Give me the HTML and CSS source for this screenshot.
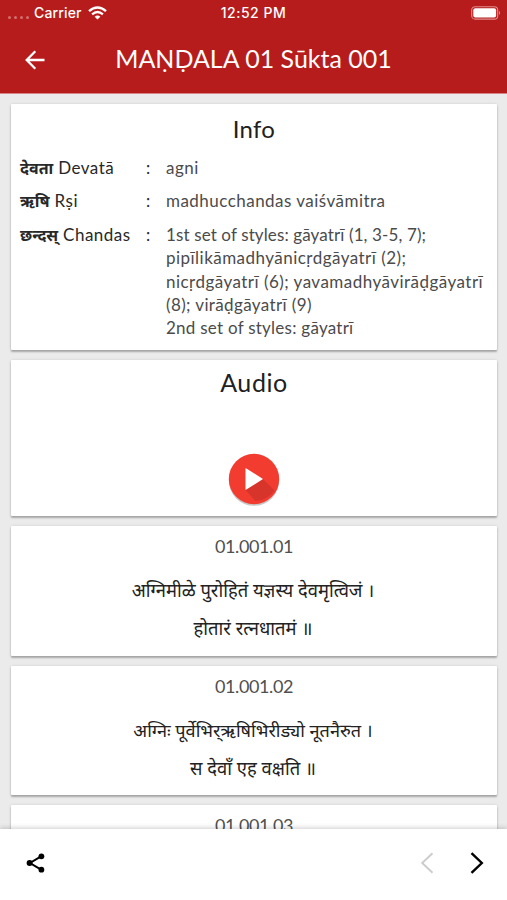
FILE: index.html
```html
<!DOCTYPE html>
<html lang="sa">
<head>
<meta charset="utf-8">
<title>Maṇḍala 01 Sūkta 001</title>
<link rel="stylesheet" href="styles.css">
</head>
<body>
<div class="screen">
  <header class="header">
    <div class="status">
      <div class="carrier">
        <span class="dots"><i></i><i></i><i></i><i></i></span>
        <span class="carrier-name">Carrier</span>
        <svg class="wifi" width="19" height="14" viewBox="0 0 19 14" fill="none" stroke="#fff" stroke-width="2.4"><path d="M1 5.1Q9.5-2.3 18 5.1"/><path d="M4.1 8.4Q9.5 3.8 14.9 8.4"/><path d="M9.5 13.6 6.6 10.8Q9.5 8.4 12.4 10.8Z" fill="#fff" stroke="none"/></svg>
      </div>
      <span class="time">12:52 PM</span>
      <svg class="battery" width="30" height="14" viewBox="0 0 30 14"><rect x=".7" y=".7" width="26" height="12.4" rx="3.4" fill="none" stroke="#e08c8c" stroke-width="1.1"/><rect x="2.3" y="2.2" width="22.8" height="9.4" rx="2" fill="#fff"/><path d="M28 4.8Q30 7 28 9Z" fill="#e08c8c"/></svg>
    </div>
    <div class="titlebar">
      <svg class="back" width="20" height="20" viewBox="0 0 20 20" fill="none" stroke="#fff" stroke-width="2.3"><path d="M19.5 10H2M10.3 1.3 1.7 10l8.6 8.7"/></svg>
      <h1 class="title">MAṆḌALA 01 Sūkta 001</h1>
    </div>
  </header>
  <main class="content">
    <section class="card info">
      <h2 class="heading info-heading">Info</h2>
      <div class="row"><div class="label"><b class="deva">देवता</b> <span>Devatā</span></div><div class="colon">:</div><div class="value wide">agni</div></div>
      <div class="row"><div class="label"><b class="deva">ऋषि</b> <span>Rṣi</span></div><div class="colon">:</div><div class="value wide">madhucchandas vaiśvāmitra</div></div>
      <div class="row"><div class="label"><b class="deva">छन्दस्</b> <span>Chandas</span></div><div class="colon">:</div><div class="value"><span class="tight">1st set of styles: gāyatrī (1, 3-5, 7);</span><br><span class="wide">pipīlikāmadhyānicṛdgāyatrī (2);</span><br><span class="wide">nicṛdgāyatrī (6); yavamadhyāvirāḍgāyatrī</span><br><span class="mid">(8); virāḍgāyatrī (9)</span><br><span class="semi">2nd set of styles: gāyatrī</span></div></div>
    </section>
    <section class="card audio">
      <h2 class="heading audio-heading">Audio</h2>
      <svg class="play" width="56" height="58" viewBox="0 0 56 58"><circle cx="28" cy="29.6" r="25.2" fill="#000" opacity=".22"/><circle cx="28" cy="28" r="25.2" fill="#f23c30"/><path d="M37 28 48.500 39.500A25 25 0 0 1 29.500 50L19.500 39Z" fill="#d7352b"/><path d="M19.500 17V39L37 28Z" fill="#fff"/></svg>
    </section>
    <section class="card verse">
      <div class="number">01.001.01</div>
      <div class="deva line first">अग्निमीळे पुरोहितं यज्ञस्य देवमृत्विजं ।</div>
      <div class="deva line">होतारं रत्नधातमं ॥</div>
    </section>
    <section class="card verse">
      <div class="number">01.001.02</div>
      <div class="deva line first narrow">अग्निः पूर्वेभिर्&zwnj;ऋषिभिरीड्यो नूतनैरुत ।</div>
      <div class="deva line">स देवाँ एह वक्षति ॥</div>
    </section>
    <section class="card verse">
      <div class="number">01.001.03</div>
    </section>
  </main>
  <footer class="footer">
    <svg class="share" width="20" height="20" viewBox="0 0 20 20"><path d="M15.500 3.200 4 10l11.500 6.800" fill="none" stroke="#000" stroke-width="2"/><circle cx="15.400" cy="3.300" r="2.900"/><circle cx="3.600" cy="10" r="3"/><circle cx="15.400" cy="16.700" r="2.900"/></svg>
    <div class="nav">
      <svg width="14" height="22" viewBox="0 0 14 22" fill="none" stroke="#ccc" stroke-width="1.900"><path d="M12.500 1.200 2.200 11l10.300 9.800"/></svg>
      <svg width="14" height="22" viewBox="0 0 14 22" fill="none" stroke="#000" stroke-width="2.400"><path d="M1.500 1.200 11.800 11 1.500 20.800"/></svg>
    </div>
  </footer>
</div>
</body>
</html>
```
FILE: styles.css
```css
* { box-sizing: border-box; }
body { margin: 0; background: #ebebeb; font-family: Lato, "Noto Sans", sans-serif; }
.screen { height: 900px; display: flex; flex-direction: column; overflow: hidden; }
.header { height: 94px; flex: none; background: #b71c1c; color: #fff; border-bottom: 1px solid #d98484; }
.status { height: 26px; display: grid; grid-template-columns: 1fr auto 1fr; align-items: center; padding: 0 7px 0 8px; font: 500 14px/26px Inter, sans-serif; }
.time { letter-spacing: .5px; margin-left: -1px; }
.carrier { display: flex; align-items: center; }
.carrier-name { letter-spacing: .15px; }
.dots { display: flex; gap: 3px; width: 26px; padding-top: 9px; }
.dots i { width: 3px; height: 3px; border-radius: 50%; background: #d46e6e; }
.wifi { margin-left: 6px; }
.battery { justify-self: end; margin-right: -1px; }
.titlebar { height: 67px; display: grid; grid-template-columns: 70px 1fr 70px; align-items: center; }
.back { margin-left: 25px; }
.title { margin: 0 0 4px; text-align: center; font-size: 25px; font-weight: 400; white-space: nowrap; }
.content { flex: 1; min-height: 0; overflow: hidden; padding: 10px 10px 0 11px; display: flex; flex-direction: column; gap: 10px; }
.card { flex: none; background: #fff; border-radius: 1px; box-shadow: 0 2px 2px rgba(0,0,0,.27), 0 0 3px rgba(0,0,0,.12); }
.info { height: 246px; }
.heading { margin: 0; text-align: center; font-size: 24px; line-height: 46px; font-weight: 400; color: #212121; letter-spacing: .3px; }
.info-heading { line-height: 50px; margin-bottom: 2px; }
.audio-heading { font-size: 25px; line-height: 45px; letter-spacing: .6px; }
.row { display: grid; grid-template-columns: 126px 20px 1fr; padding-left: 9px; margin-bottom: 10px; font-size: 17px; line-height: 23.4px; color: #4b4b4b; white-space: nowrap; }
.label { color: #282828; letter-spacing: .5px; }
.colon { color: #282828; }
.tight { letter-spacing: .12px; }
.wide { letter-spacing: .47px; }
.mid { letter-spacing: .38px; }
.semi { letter-spacing: .25px; }
.deva { font-family: "Noto Sans Devanagari", Lato, sans-serif; }
.row .deva { font-size: 16px; line-height: 1; letter-spacing: 0; }
.audio { height: 156px; display: flex; flex-direction: column; align-items: center; }
.play { margin-top: 46px; }
.verse { height: 129.500px; text-align: center; color: #222; }
.number { padding-top: 8px; font-size: 18px; line-height: 24px; color: #505050; letter-spacing: -.4px; }
.line { padding-right: 2px; font-size: 18.4px; line-height: 38px; white-space: nowrap; }
.first { margin-top: 16px; }
.narrow { font-size: 18.100px; }
.footer { position: relative; flex: none; height: 71px; background: #fff; box-shadow: 0 -1px 5px rgba(0,0,0,.2); display: flex; justify-content: space-between; align-items: center; padding: 0 23px 3px 26px; }
.nav { display: flex; gap: 36px; }
```
